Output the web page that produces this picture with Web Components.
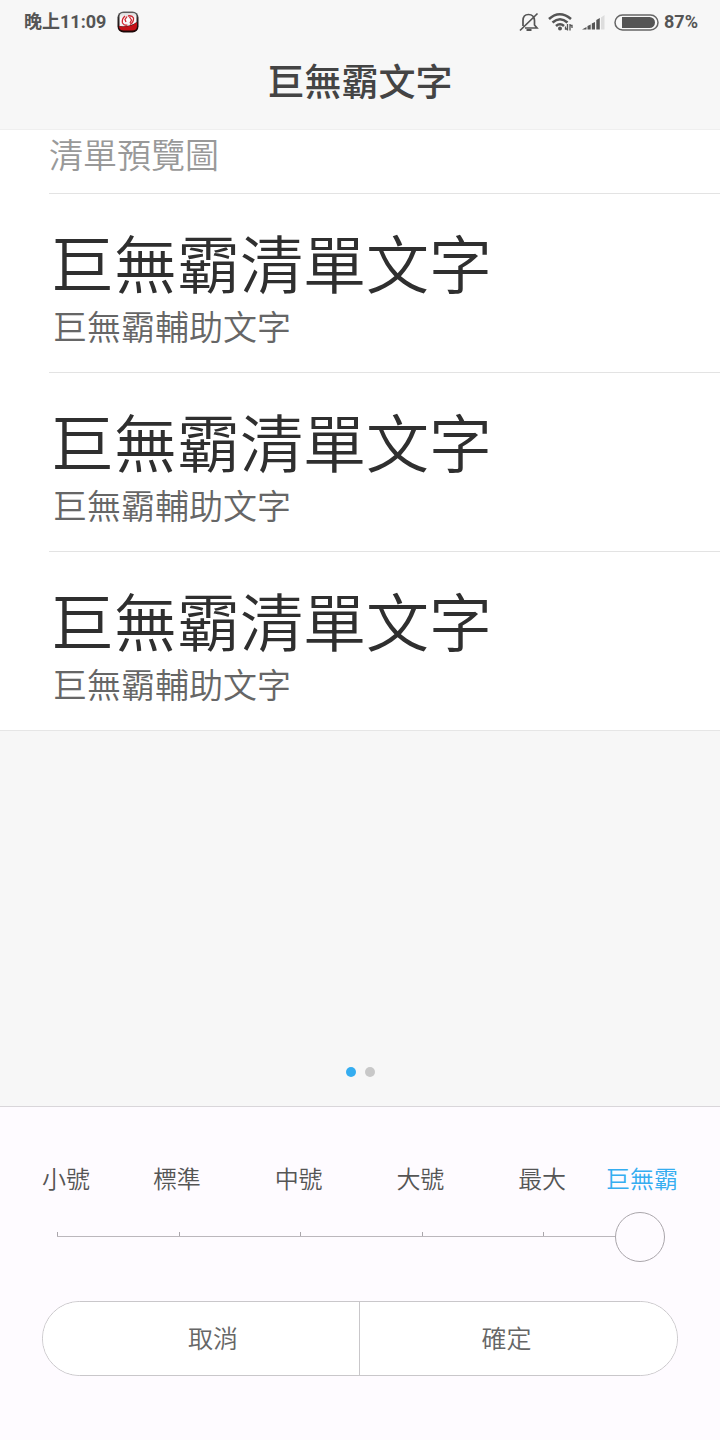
<!DOCTYPE html>
<html lang="zh-Hant">
<head>
<meta charset="utf-8">
<meta name="viewport" content="width=device-width, initial-scale=1">
<title>巨無霸文字</title>
<style>
  body {
    margin: 0;
    background: #f7f7f7;
    color: #2f2f2f;
    font-family: Roboto, "Noto Sans CJK TC", sans-serif;
  }
</style>
</head>
<body>
<text-size-page></text-size-page>

<template id="status-bar">
  <style>
    :host { display: flex; justify-content: space-between; align-items: center; height: 44px; padding: 0 22px 0 24px; color: #555; font-size: 18px; font-weight: 700; line-height: 24px; }
    div { display: flex; align-items: center; }
    svg { display: block; }
    .left { gap: 11px; }
    .right { gap: 9px; }
    .right .battery { margin-right: -4px; }
  </style>
  <div class="left">
    <span>晚上11:09</span>
    <svg width="22" height="22" viewBox="0 0 22 22" aria-hidden="true">
      <defs>
        <linearGradient id="rim" x1="0" y1="0" x2="0" y2="1"><stop offset="0" stop-color="#666"/><stop offset=".35" stop-color="#292424"/><stop offset="1" stop-color="#1b0505"/></linearGradient>
        <linearGradient id="face" x1="0" y1="0" x2="0" y2="1"><stop offset="0" stop-color="#ddd"/><stop offset=".5" stop-color="#fff"/><stop offset="1" stop-color="#eee"/></linearGradient>
      </defs>
      <rect x=".5" y=".5" width="21" height="21" rx="6" fill="url(#rim)"/>
      <path d="M2 15Q13 17 20 11v4q0 4.500-5 4.500H7q-5 0-5-4.500z" fill="#c51218"/>
      <path d="M6 2h10q3.500 0 3.500 3.500V11Q14 16 2.500 15V5.500Q2.500 2 6 2z" fill="url(#face)"/>
      <path d="M8 5Q4.500 8 5.500 12q2 3 5 2M10 5.500l-2 3 1 2.500M11 5q4-1 5.500 2 .5 4-3.500 6.500M12.500 6l2 3-1.500 3" fill="none" stroke="#cf2730" stroke-width="1.300"/>
    </svg>
  </div>
  <div class="right">
    <svg width="20" height="20" viewBox="0 0 20 20" fill="none" stroke="#555" stroke-width="1.700" aria-hidden="true">
      <path d="M4 14V8.500Q4 2.500 9.500 2.500T15.500 8.500V13l2.500 3H6M1 18.500 18.500 1.500"/><path d="M7.500 18h5" stroke-width="2"/>
    </svg>
    <svg width="25" height="20" viewBox="0 0 25 20" fill="none" stroke="#555" stroke-width="2.600" aria-hidden="true">
      <path d="M1 7Q11.500-2.500 23 7M4.500 10.500Q12 4 19.500 10.500M8 14Q12 10.500 16 14"/><circle cx="12" cy="16.500" r="2" fill="#555" stroke="none"/><path d="M19.500 12v6.500M17.500 14.500v2.500h2M22 18.500V12M22 13.500h2V16" stroke-width="1.300"/>
    </svg>
    <svg width="23" height="16" viewBox="0 0 23 16" fill="#555" aria-hidden="true">
      <path d="M0 15.500 4.500 13v2.500zM5.500 12l3.200-1.500v5H5.500zM9.800 9.500 13 8v7.500H9.800zM14.300 6l3.500-2v11.500h-3.500z"/><path d="M19 3.500 22.500 1v14.500H19z" fill="#ddd"/>
    </svg>
    <svg class="battery" width="45" height="17" viewBox="0 0 45 17" aria-hidden="true">
      <rect x="1" y="1" width="43" height="15" rx="7.500" fill="#f9f9f9" stroke="#666" stroke-width="1.500"/><path d="M8 3h27.500a5.500 5.500 0 0 1 0 11H8z" fill="#555"/>
    </svg>
    <span>87%</span>
  </div>
</template>

<template id="page-title">
  <style>
    :host { display: block; height: 86px; border-bottom: 1px solid #efefef; box-sizing: border-box; }
    h1 { margin: 0; padding-top: 12px; font-size: 37px; line-height: 56px; font-weight: 500; text-align: center; color: #444; }
  </style>
  <h1><slot></slot></h1>
</template>

<template id="preview-list">
  <style>
    :host { display: block; background: #fff; border-bottom: 1px solid #e6e6e6; }
    h2 { margin: 0 0 0 49px; padding: 5px 0 16px; font-size: 34px; line-height: 42px; font-weight: 350; color: #999; }
  </style>
  <h2>清單預覽圖</h2>
  <slot></slot>
</template>

<template id="preview-item">
  <style>
    :host { display: block; margin-left: 49px; padding: 32px 0 24px; border-top: 1px solid #e3e3e3; white-space: nowrap; }
    p { margin: 0; }
    .main { padding-left: 2px; font-size: 63px; line-height: 82px; font-weight: 350; color: #2f2f2f; }
    .sub { padding-left: 4px; font-size: 34px; line-height: 40px; font-weight: 350; color: #666; }
  </style>
  <p class="main"><slot></slot></p>
  <p class="sub"><slot name="sub"></slot></p>
</template>

<template id="page-dots">
  <style>
    :host { display: flex; justify-content: center; gap: 9px; padding-bottom: 29px; }
    i { width: 10px; height: 10px; border-radius: 50%; background: #c8c8c8; }
    .on { background: #35adf0; }
  </style>
  <i class="on"></i><i></i>
</template>

<template id="size-slider">
  <style>
    :host { display: block; }
    .labels { display: grid; grid-template-columns: 74px repeat(4, 1fr) 75px; font-size: 24px; line-height: 32px; font-weight: 350; color: #555; text-align: center; white-space: nowrap; }
    .labels span:first-child { text-align: left; }
    .labels span:last-child { text-align: right; }
    .labels .on { color: #35adf0; }
    .rail { display: grid; margin: 16px 13px 0 15px; }
    .ticks, input { grid-area: 1 / 1; }
    .ticks { display: grid; grid-template-columns: repeat(5, 1fr); align-self: start; margin-top: 20px; height: 4px; border-bottom: 1px solid #bbb7bc; }
    .ticks i { border-left: 1px solid #aaa6ab; }
    input { -webkit-appearance: none; appearance: none; width: 100%; height: 50px; margin: 0; background: transparent; }
    input::-webkit-slider-thumb { -webkit-appearance: none; box-sizing: border-box; width: 50px; height: 50px; border: 1px solid #aaa6ab; border-radius: 50%; background: #fefbff; }
  </style>
  <div class="labels"></div>
  <div class="rail">
    <div class="ticks"><i></i><i></i><i></i><i></i><i></i></div>
    <input type="range" min="0" max="5" step="1" value="5" aria-label="文字大小">
  </div>
</template>

<template id="button-pair">
  <style>
    :host { display: grid; grid-template-columns: 1fr 1fr; border: 1px solid #c9c7ca; border-radius: 38px; overflow: hidden; background: #fff; }
    button { height: 73px; margin: 0; padding: 3px 0 0 24px; border: 0; border-right: 1px solid #c9c7ca; background: #fff; color: #666; font: inherit; font-size: 25px; line-height: 34px; font-weight: 350; }
    button + button { padding: 3px 24px 0 0; border: 0; }
  </style>
  <button type="button">取消</button><button type="button">確定</button>
</template>

<template id="text-size-page">
  <style>
    :host { display: flex; flex-direction: column; min-height: 100vh; }
    main { flex: 1; display: flex; flex-direction: column; justify-content: space-between; }
    footer { display: flex; flex-direction: column; gap: 39px; padding: 57px 42px 64px; border-top: 1px solid #d9d6da; background: #fefbff; }
  </style>
  <status-bar></status-bar>
  <page-title>巨無霸文字</page-title>
  <main>
    <preview-list>
      <preview-item>巨無霸清單文字<span slot="sub">巨無霸輔助文字</span></preview-item>
      <preview-item>巨無霸清單文字<span slot="sub">巨無霸輔助文字</span></preview-item>
      <preview-item>巨無霸清單文字<span slot="sub">巨無霸輔助文字</span></preview-item>
    </preview-list>
    <page-dots></page-dots>
  </main>
  <footer>
    <size-slider></size-slider>
    <button-pair></button-pair>
  </footer>
</template>

<script>
  class TemplateElement extends HTMLElement {
    constructor() {
      super();
      const template = document.getElementById(this.localName);
      this.attachShadow({ mode: "open" }).append(template.content.cloneNode(true));
    }
  }

  class SizeSlider extends TemplateElement {
    connectedCallback() {
      const labels = this.shadowRoot.querySelector(".labels");
      const input = this.shadowRoot.querySelector("input");
      const names = ["小號", "標準", "中號", "大號", "最大", "巨無霸"];
      labels.replaceChildren(...names.map((name) => {
        const span = document.createElement("span");
        span.textContent = name;
        return span;
      }));
      const update = () => {
        [...labels.children].forEach((span, i) => span.classList.toggle("on", i === Number(input.value)));
        input.setAttribute("aria-valuetext", names[input.value]);
      };
      input.addEventListener("input", update);
      update();
    }
  }

  for (const name of ["status-bar", "page-title", "preview-list", "preview-item", "page-dots", "button-pair"]) {
    customElements.define(name, class extends TemplateElement {});
  }
  customElements.define("size-slider", SizeSlider);
  customElements.define("text-size-page", class extends TemplateElement {});
</script>
</body>
</html>
